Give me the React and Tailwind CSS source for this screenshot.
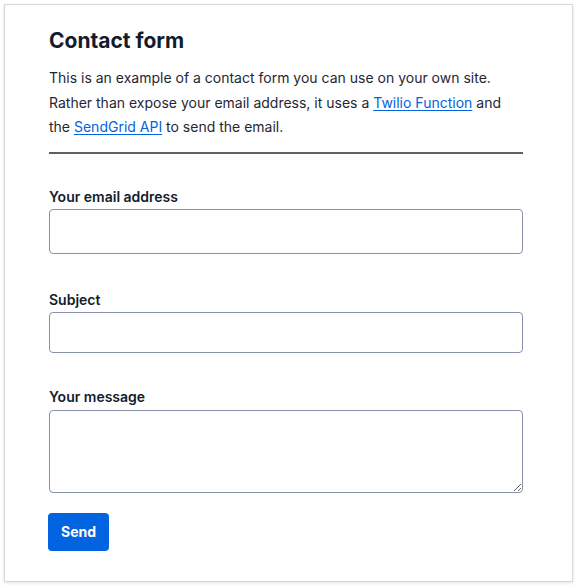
export default function App() {
  return (
    <div className="bg-white p-1 font-['Inter','Noto_Sans',sans-serif] text-[#121c2d]">
      <div className="w-[569px] h-[578px] border border-[#d8d8d8] shadow-[0_1px_3px_rgba(0,0,0,0.12)] bg-white pl-[44px] pt-[21px]">
        <div className="w-[474px]">
          <h1 className="text-[21px] font-bold leading-[30px]">Contact form</h1>
          <p className="mt-[10px] text-[14px] leading-[24.5px] text-[#1f2733]">
            This is an example of a contact form you can use on your own site. Rather than expose your email address, it uses a{' '}
            <a href="#" className="text-[#0263e0] underline underline-offset-2">Twilio Function</a> and the{' '}
            <a href="#" className="text-[#0263e0] underline underline-offset-2">SendGrid API</a> to send the email.
          </p>
          <hr className="mt-[12px] border-t-2 border-[#606060]" />

          <form className="mt-[33px]">
            <label className="block text-[14px] font-semibold leading-5">Your email address</label>
            <input type="email" className="mt-[2px] block w-full h-[45px] rounded-[4px] border border-[#8891aa] bg-white" />

            <label className="mt-[36px] block text-[14px] font-semibold leading-5">Subject</label>
            <input type="text" className="mt-[2px] block w-full h-[41px] rounded-[4px] border border-[#8891aa] bg-white" />

            <label className="mt-[34px] block text-[14px] font-semibold leading-5">Your message</label>
            <textarea className="mt-[3px] block w-full h-[83px] rounded-[4px] border border-[#8891aa] bg-white" />

            <button type="button" className="mt-[20px] -ml-px h-[38px] w-[61px] rounded-[4px] bg-[#0263e0] text-white text-[14px] font-bold">
              Send
            </button>
          </form>
        </div>
      </div>
    </div>
  );
}
